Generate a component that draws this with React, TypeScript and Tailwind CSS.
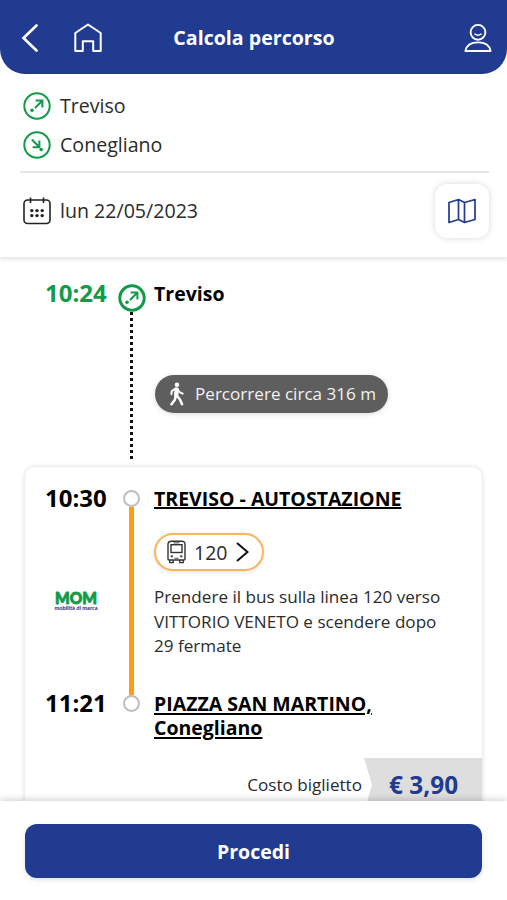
import React from "react";

function DirectionIcon({ down = false, strokeWidth = 2, className = "" }: { down?: boolean; strokeWidth?: number; className?: string }) {
  return (
    <svg viewBox="0 0 28 28" className={className} fill="none" stroke="#129a48">
      <circle cx="14" cy="14" r={14 - strokeWidth / 2 - 0.3} strokeWidth={strokeWidth} />
      {down ? (
        <>
          <path d="M8.8 8.5 L16 15.8 M16.4 9.5 V16.2 H9.6" strokeWidth="2" />
          <circle cx="18.2" cy="18.6" r="1.8" fill="#129a48" stroke="none" />
        </>
      ) : (
        <>
          <path d="M12 16 L19 9 M12.6 8.6 H19.4 V15.4" strokeWidth="2" />
          <circle cx="9" cy="18.2" r="1.8" fill="#129a48" stroke="none" />
        </>
      )}
    </svg>
  );
}

function HomeIcon() {
  return (
    <svg viewBox="0 0 28 30" className="h-[30px] w-7" fill="none" stroke="#fff" strokeWidth="2" strokeLinejoin="round">
      <path d="M1.3 10 L14 1.5 L26.7 10 V28 H19.2 V18.2 H8.8 V28 H1.3 Z" />
    </svg>
  );
}

function UserIcon() {
  return (
    <svg viewBox="0 0 28 30" className="h-[30px] w-7" fill="none" stroke="#fff" strokeWidth="1.9" strokeLinejoin="round" strokeLinecap="round">
      <circle cx="14" cy="9.3" r="7.4" />
      <path d="M11 11.2 Q14 13.2 17 11.2" strokeWidth="1.6" />
      <path d="M1.4 28 Q3 19.4 14 19.4 Q25 19.4 26.6 28 Z" />
    </svg>
  );
}

function CalendarIcon() {
  return (
    <svg viewBox="0 0 28 28" className="h-7 w-7" fill="none" stroke="#222" strokeWidth="1.6">
      <rect x="1" y="3" width="26" height="23.5" rx="3.5" />
      <path d="M7.5 0.5 V6 M20.5 0.5 V6" />
      <g fill="#222" stroke="none">
        <circle cx="8.8" cy="13.6" r="1.7" />
        <circle cx="14" cy="13.6" r="1.7" />
        <circle cx="19.2" cy="13.6" r="1.7" />
        <circle cx="8.8" cy="18.6" r="1.7" />
        <circle cx="14" cy="18.6" r="1.7" />
        <circle cx="19.2" cy="18.6" r="1.7" />
      </g>
    </svg>
  );
}

function MapIcon() {
  return (
    <svg viewBox="0 0 28 26" className="h-[26px] w-7" fill="none" stroke="#203b8f" strokeWidth="1.7" strokeLinejoin="round">
      <path d="M1 4.5 L10.5 1.5 L16.5 4.5 L27 1.5 V21.5 L16.5 24.5 L10.5 21.5 L1 24.5 Z M10.5 1.5 V21.5 M16.5 4.5 V24.5" />
    </svg>
  );
}

function WalkIcon() {
  return (
    <svg viewBox="0 0 16 24" className="h-6 w-4" fill="none" stroke="#fff" strokeLinecap="round" strokeLinejoin="round">
      <circle cx="8" cy="2.7" r="2.3" fill="#fff" stroke="none" />
      <path d="M7.6 7.4 L7.2 13.4" strokeWidth="4.4" />
      <path d="M6.4 6.5 L2.8 9 L2.4 12.2 M8.5 7 L10.5 10.2 L13.7 11.7" strokeWidth="2" />
      <path d="M6.8 14.5 L5.6 18.3 L2.5 22.3 M8.2 14 L11 17.5 L13 22.3" strokeWidth="2.5" />
    </svg>
  );
}

function BusIcon() {
  return (
    <svg viewBox="0 0 19 24" className="h-6 w-[19px]" fill="none" stroke="#333" strokeWidth="1.4">
      <path d="M2 20 H17 Q18 20 18 19 V4.5 Q18 1.2 14.7 1.2 H4.3 Q1 1.2 1 4.5 V19 Q1 20 2 20 Z" />
      <rect x="4" y="4.7" width="11" height="7.8" />
      <path d="M6.5 2.9 H12.5" strokeWidth="0.9" />
      <path d="M2.8 20 V22.6 H6.2 V20 M12.8 20 V22.6 H16.2 V20" />
      <path d="M7.5 18.3 H11.5" strokeWidth="0.9" />
      <circle cx="4.8" cy="16.3" r="1.2" fill="#555" stroke="none" />
      <circle cx="14.2" cy="16.3" r="1.2" fill="#555" stroke="none" />
    </svg>
  );
}

function OperatorLogo() {
  return (
    <svg viewBox="0 0 44 32" className="h-8 w-11 overflow-visible">
      <text x="1" y="17.5" textLength="42" lengthAdjust="spacingAndGlyphs" fontFamily="Lato" fontWeight="900" fontSize="16" fill="#129a48" stroke="#129a48" strokeWidth="0.9" strokeLinejoin="round">MOM</text>
      <text x="0.5" y="24.2" textLength="43" lengthAdjust="spacingAndGlyphs" fontFamily="Lato" fontWeight="900" fontSize="5.4" fill="#203b8f">mobilità di marca</text>
    </svg>
  );
}

function StopRing() {
  return <span className="block h-[17px] w-[17px] shrink-0 rounded-full border-2 border-[#bdbdbd] bg-white" />;
}

export default function App() {
  return (
    <div className="flex h-[900px] w-[507px] flex-col overflow-hidden bg-white font-['Open_Sans',sans-serif] text-[#2b2b2b]">
      <header className="grid h-[74px] shrink-0 grid-cols-[1fr_auto_1fr] items-center rounded-b-[25px] bg-[#203b8f] pr-[15px] pl-[21px] text-white">
        <div className="flex items-center gap-[36px] pt-px">
          <svg viewBox="0 0 17 28" className="h-7 w-[17px]" fill="none" stroke="#fff" strokeWidth="2.6" strokeLinecap="round">
            <path d="M15.5 1.5 L2.5 14 L15.5 26.5" />
          </svg>
          <HomeIcon />
        </div>
        <h1 className="mr-[5px] pt-px text-[19.6px] font-bold">Calcola percorso</h1>
        <div className="flex justify-end pt-px"><UserIcon /></div>
      </header>

      <section className="relative z-10 h-[183px] shrink-0 bg-white pt-[12px] pr-[18px] pl-5 shadow-[0_2px_5px_rgba(0,0,0,0.13)]">
        <div className="flex h-[39px] items-center gap-[9px] pl-[3px] text-[19.6px]">
          <DirectionIcon className="h-7 w-7" />
          <span>Treviso</span>
        </div>
        <div className="flex h-[39px] items-center gap-[9px] pl-[3px] text-[19.6px]">
          <DirectionIcon down className="h-7 w-7" />
          <span>Conegliano</span>
        </div>
        <div className="mt-[7px] flex h-[78px] items-center justify-between border-t-2 border-[#e6e6e6] pl-[3px]">
          <div className="flex items-center gap-[9px] text-[19.6px]">
            <CalendarIcon />
            <span>lun 22/05/2023</span>
          </div>
          <button className="flex h-[54px] w-[54px] items-center justify-center rounded-[12px] bg-white shadow-[0_0_6px_rgba(0,0,0,0.16)]">
            <MapIcon />
          </button>
        </div>
      </section>

      <main className="min-h-0 flex-1 overflow-hidden px-[25px]">
        <div className="grid h-[210px] grid-cols-[93px_27px_1fr] pt-[20px]">
          <span className="pl-[20px] text-[24px] leading-[32px] font-bold text-[#129a48]">10:24</span>
          <div className="flex flex-col items-center pt-[7px]">
            <DirectionIcon strokeWidth={3} className="h-7 w-7 shrink-0" />
            <div className="h-[147px] w-[3px] bg-[repeating-linear-gradient(to_bottom,#111_0,#111_3px,transparent_3px,transparent_6px)]" />
          </div>
          <div className="pl-[9px]">
            <div className="pt-px text-[19.5px] leading-[32px] font-bold text-black">Treviso</div>
            <div className="mt-[65px] ml-px flex h-[38px] w-[233px] items-center gap-[10px] rounded-full bg-[#5e5e5e] pl-[14px] text-[17.1px] whitespace-nowrap text-[#f2f2f2] shadow-[0_1px_5px_rgba(0,0,0,0.15)]">
              <WalkIcon />
              <span>Percorrere circa 316 m</span>
            </div>
          </div>
        </div>

        <article className="h-[380px] rounded-[10px] bg-white pt-[15px] shadow-[0_0_5px_rgba(0,0,0,0.16)]">
          <div className="grid h-[276px] grid-cols-[93px_27px_1fr]">
            <div className="pl-[20px] text-[24px] leading-[32px] font-bold text-black">
              <div>10:30</div>
              <div className="mt-[72px] mb-[69px] flex h-[32px] pl-[9px]"><OperatorLogo /></div>
              <div>11:21</div>
            </div>
            <div className="flex flex-col items-center pt-[8px]">
              <StopRing />
              <div className="h-[188px] w-[5px] shrink-0 bg-[#ff9e16]" />
              <StopRing />
            </div>
            <div className="pl-[9px]">
              <div className="pt-px text-[19.5px] leading-[32px] font-bold text-black underline decoration-2 underline-offset-1">TREVISO - AUTOSTAZIONE</div>
              <div className="mt-[18px] flex h-[38px] w-[110px] items-center rounded-full border-2 border-[#f6b660] pl-[11px] text-[19.5px] shadow-[0_1px_4px_rgba(0,0,0,0.12)]">
                <BusIcon />
                <span className="ml-[8px] pt-px">120</span>
                <svg viewBox="0 0 13 20" className="ml-[9px] h-5 w-[13px]" fill="none" stroke="#111" strokeWidth="2">
                  <path d="M1 1 L11.5 10 L1 19" />
                </svg>
              </div>
              <p className="mt-[14px] text-[17.1px] leading-[24.5px] whitespace-nowrap">
                Prendere il bus sulla linea 120 verso<br />VITTORIO VENETO e scendere dopo<br />29 fermate
              </p>
              <div className="mt-[33px] text-[19.5px] leading-[24.5px] font-bold text-black underline decoration-2 underline-offset-2">
                PIAZZA SAN MARTINO,<br />Conegliano
              </div>
            </div>
          </div>
          <div className="flex h-[54px] items-center justify-end">
            <span className="mr-[2px] text-[17.1px]">Costo biglietto</span>
            <div className="flex h-[54px] w-[118px] items-center bg-[#dedede] pl-[25px] text-[24.4px] font-bold text-[#203b8f] [clip-path:polygon(0_0,100%_0,100%_100%,0_100%,8px_27px)]">
              € 3,90
            </div>
          </div>
        </article>
      </main>

      <footer className="relative z-10 h-[99px] shrink-0 bg-white px-[25px] pt-[23px] shadow-[0_-2px_6px_rgba(0,0,0,0.16)]">
        <button className="flex h-[54px] w-full items-center justify-center rounded-[12px] bg-[#203b8f] pt-px text-[19.5px] font-bold text-white shadow-[0_2px_5px_rgba(0,0,0,0.12)]">
          Procedi
        </button>
      </footer>
    </div>
  );
}
